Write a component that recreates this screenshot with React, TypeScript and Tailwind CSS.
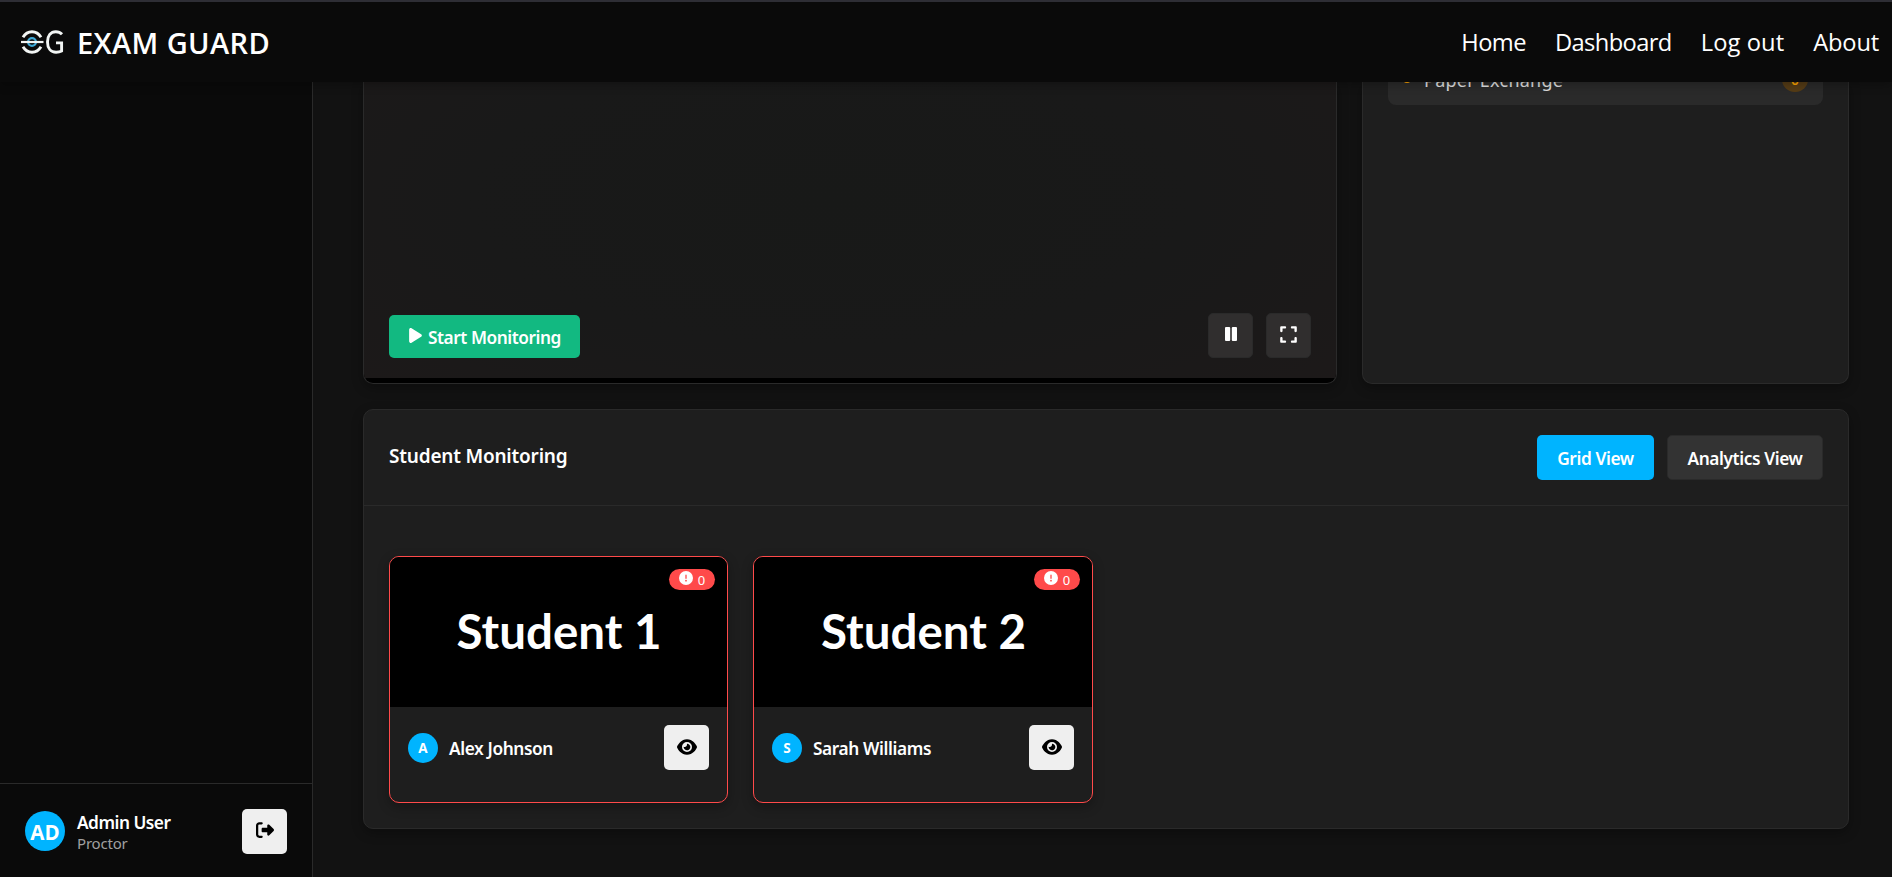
import { FaPlay, FaExpand, FaEye, FaCircleExclamation, FaRightFromBracket } from 'react-icons/fa6'

function Logo() {
  return (
    <svg className="mr-[13px] h-[28px] w-[43px] shrink-0" viewBox="0 0 43 28" fill="none" stroke="#f2f5f4" strokeWidth="2.9">
      <path d="M2 9.300C4.200 5.600 7 3.800 11 3.800s6.800 1.800 9 5.500" />
      <path d="M2 18.700C4.200 22.400 7 24.200 11 24.200s6.800-1.800 9-5.500" />
      <circle cx="11" cy="14" r="3.900" stroke="#3fa9d6" strokeWidth="2.200" />
      <path d="M0 14h22.500" strokeWidth="2.200" />
      <path d="M41 6.200C39.400 4.500 37.300 3.700 34.800 3.700c-5 0-8.300 4.100-8.300 10.200s3.200 10.300 8.600 10.300c2.200 0 3.900-.4 5.500-1.300V14.900h-5.600" />
    </svg>
  )
}

function PauseIcon() {
  return (
    <svg className="h-[14px] w-[12px]" viewBox="0 0 12 14" fill="currentColor">
      <rect width="5.200" height="14" rx="1" />
      <rect x="6.800" width="5.200" height="14" rx="1" />
    </svg>
  )
}

function Navbar() {
  return (
    <header className="relative z-10 flex h-[82px] shrink-0 items-center border-t-2 border-[#2e2e35] bg-[#0a0a0a] pr-[13px] pl-[21px] text-white shadow-[0_2px_10px_rgba(0,0,0,0.3)]">
      <Logo />
      <span className="pt-px text-[29px] font-semibold tracking-[0.4px]">EXAM GUARD</span>
      <nav className="ml-auto flex gap-[29px] pt-[2px] text-[23.700px]">
        <a className="tracking-[-0.6px]">Home</a>
        <a className="tracking-[-0.6px]">Dashboard</a>
        <a className="tracking-[0.1px]">Log out</a>
        <a className="tracking-[-0.2px]">About</a>
      </nav>
    </header>
  )
}

function Sidebar() {
  return (
    <aside className="flex w-[313px] shrink-0 flex-col justify-end border-r border-[#2a2a2a] bg-[#0a0a0a]">
      <div className="flex h-[94px] items-center border-t border-[#2a2a2a] px-[25px] pt-px">
        <div className="flex size-10 items-center justify-center rounded-full bg-[#00b4ff] pt-[3px] text-[20.500px] font-bold text-white">AD</div>
        <div className="ml-[12px] flex flex-col pt-[2px] font-['Noto_Sans']">
          <span className="text-[17.300px] leading-[21px] font-semibold tracking-[-0.5px] text-white">Admin User</span>
          <span className="text-[15px] leading-[20px] tracking-[-0.2px] text-[#a0a0a0]">Proctor</span>
        </div>
        <button className="ml-auto flex size-[45px] items-center justify-center rounded-[5px] bg-[#efefef] pb-[3px] text-black">
          <FaRightFromBracket size={18} />
        </button>
      </div>
    </aside>
  )
}

function VideoPanel() {
  return (
    <section className="flex w-[974px] flex-col overflow-hidden rounded-b-[10px] border border-t-0 border-[#2a2a2a] bg-black pb-[5px] shadow-[0_4px_12px_rgba(0,0,0,0.3)]">
      <div className="flex grow items-end justify-between bg-[radial-gradient(ellipse_75%_100%_at_48%_40%,#181918_0%,#191919_50%,#1d1919_100%)] px-[25px] pb-5">
        <button className="flex h-[43px] w-[191px] items-center justify-center rounded-[5px] bg-[#12b981] pr-px text-white">
          <FaPlay size={17} className="mr-[4px] mb-[3px]" />
          <span className="pt-[3px] font-['Noto_Sans'] text-[17.300px] font-semibold tracking-[-0.45px]">Start Monitoring</span>
        </button>
        <div className="flex gap-[13px]">
          <button className="flex size-[45px] items-center justify-center rounded-[5px] border border-[#2a2a2a] bg-[#302e2e] pb-[3px] text-white">
            <PauseIcon />
          </button>
          <button className="flex size-[45px] items-center justify-center rounded-[5px] border border-[#2a2a2a] bg-[#302e2e] pb-[3px] text-white">
            <FaExpand size={19} />
          </button>
        </div>
      </div>
    </section>
  )
}

function AlertsPanel() {
  return (
    <section className="flex grow flex-col rounded-b-[10px] border border-t-0 border-[#2a2a2a] bg-[#1e1e1e] px-[25px] shadow-[0_4px_12px_rgba(0,0,0,0.3)]">
      <div className="-mt-[27px] flex h-[50px] items-center rounded-[8px] bg-[#2a2a2a] px-[15px]">
        <span className="mt-[-3px] size-[8px] rounded-full bg-[#ffa500]" />
        <span className="ml-[13px] pt-px font-['Noto_Sans'] text-[18px] tracking-[0.25px] text-[#e0e0e0]">Paper Exchange</span>
        <span className="mb-[2px] ml-auto flex h-[25px] w-[26px] items-center justify-center rounded-full bg-[#553c16] text-[14px] font-semibold text-[#ffa500]">0</span>
      </div>
    </section>
  )
}

function StudentCard({ label, name }: { label: string; name: string }) {
  return (
    <article className="flex h-[247px] flex-col overflow-hidden rounded-[10px] border border-[#ff4a4a] bg-[#1e1e1e] shadow-[0_4px_12px_rgba(0,0,0,0.3)]">
      <div className="relative flex h-[150px] items-center justify-center bg-black pb-[2px] pl-px font-['Lato'] text-[47.500px] font-bold text-white">
        {label}
        <span className="absolute top-3 right-3 flex h-[21px] w-[46px] items-center justify-center gap-[5px] rounded-full bg-[#ff4a4a] font-['Noto_Sans'] text-[13px] font-normal">
          <FaCircleExclamation size={14} className="mb-[3px]" />
          <span className="pt-[2px]">0</span>
        </span>
      </div>
      <div className="flex items-center px-[18px] pt-[18px]">
        <span className="flex size-[30px] items-center justify-center rounded-full bg-[#00b4ff] pt-px text-[13.500px] font-bold text-white">{name[0]}</span>
        <span className="ml-[11px] pt-[2px] font-['Noto_Sans'] text-[17.300px] font-semibold tracking-[-0.4px] text-white">{name}</span>
        <button className="ml-auto flex size-[45px] items-center justify-center rounded-[5px] bg-[#efefef] pb-px text-black">
          <FaEye size={20} />
        </button>
      </div>
    </article>
  )
}

function StudentMonitoring() {
  return (
    <section className="h-[420px] rounded-[10px] border border-[#2a2a2a] bg-[#1e1e1e] shadow-[0_4px_12px_rgba(0,0,0,0.3)]">
      <div className="flex h-[96px] items-center justify-between border-b border-[#2a2a2a] px-[25px] font-['Noto_Sans'] text-white">
        <h2 className="pb-[3px] text-[19px] font-semibold tracking-[-0.2px]">Student Monitoring</h2>
        <div className="flex gap-[13px] text-[17.300px] font-semibold tracking-[-0.4px]">
          <button className="h-[45px] w-[117px] rounded-[5px] bg-[#00b4ff] pt-[2px]">Grid View</button>
          <button className="h-[45px] w-[156px] rounded-[5px] border border-[#2a2a2a] bg-[#333333] pt-[2px]">Analytics View</button>
        </div>
      </div>
      <div className="grid grid-cols-[339px_340px] gap-[25px] px-[25px] pt-[50px]">
        <StudentCard label="Student 1" name="Alex Johnson" />
        <StudentCard label="Student 2" name="Sarah Williams" />
      </div>
    </section>
  )
}

export default function App() {
  return (
    <div className="flex h-[877px] w-full flex-col overflow-hidden bg-[#121212] font-['Open_Sans',sans-serif]">
      <Navbar />
      <div className="flex min-h-0 grow">
        <Sidebar />
        <main className="flex grow flex-col gap-[25px] pr-[43px] pl-[50px]">
          <div className="flex h-[302px] gap-[25px]">
            <VideoPanel />
            <AlertsPanel />
          </div>
          <StudentMonitoring />
        </main>
      </div>
    </div>
  )
}
